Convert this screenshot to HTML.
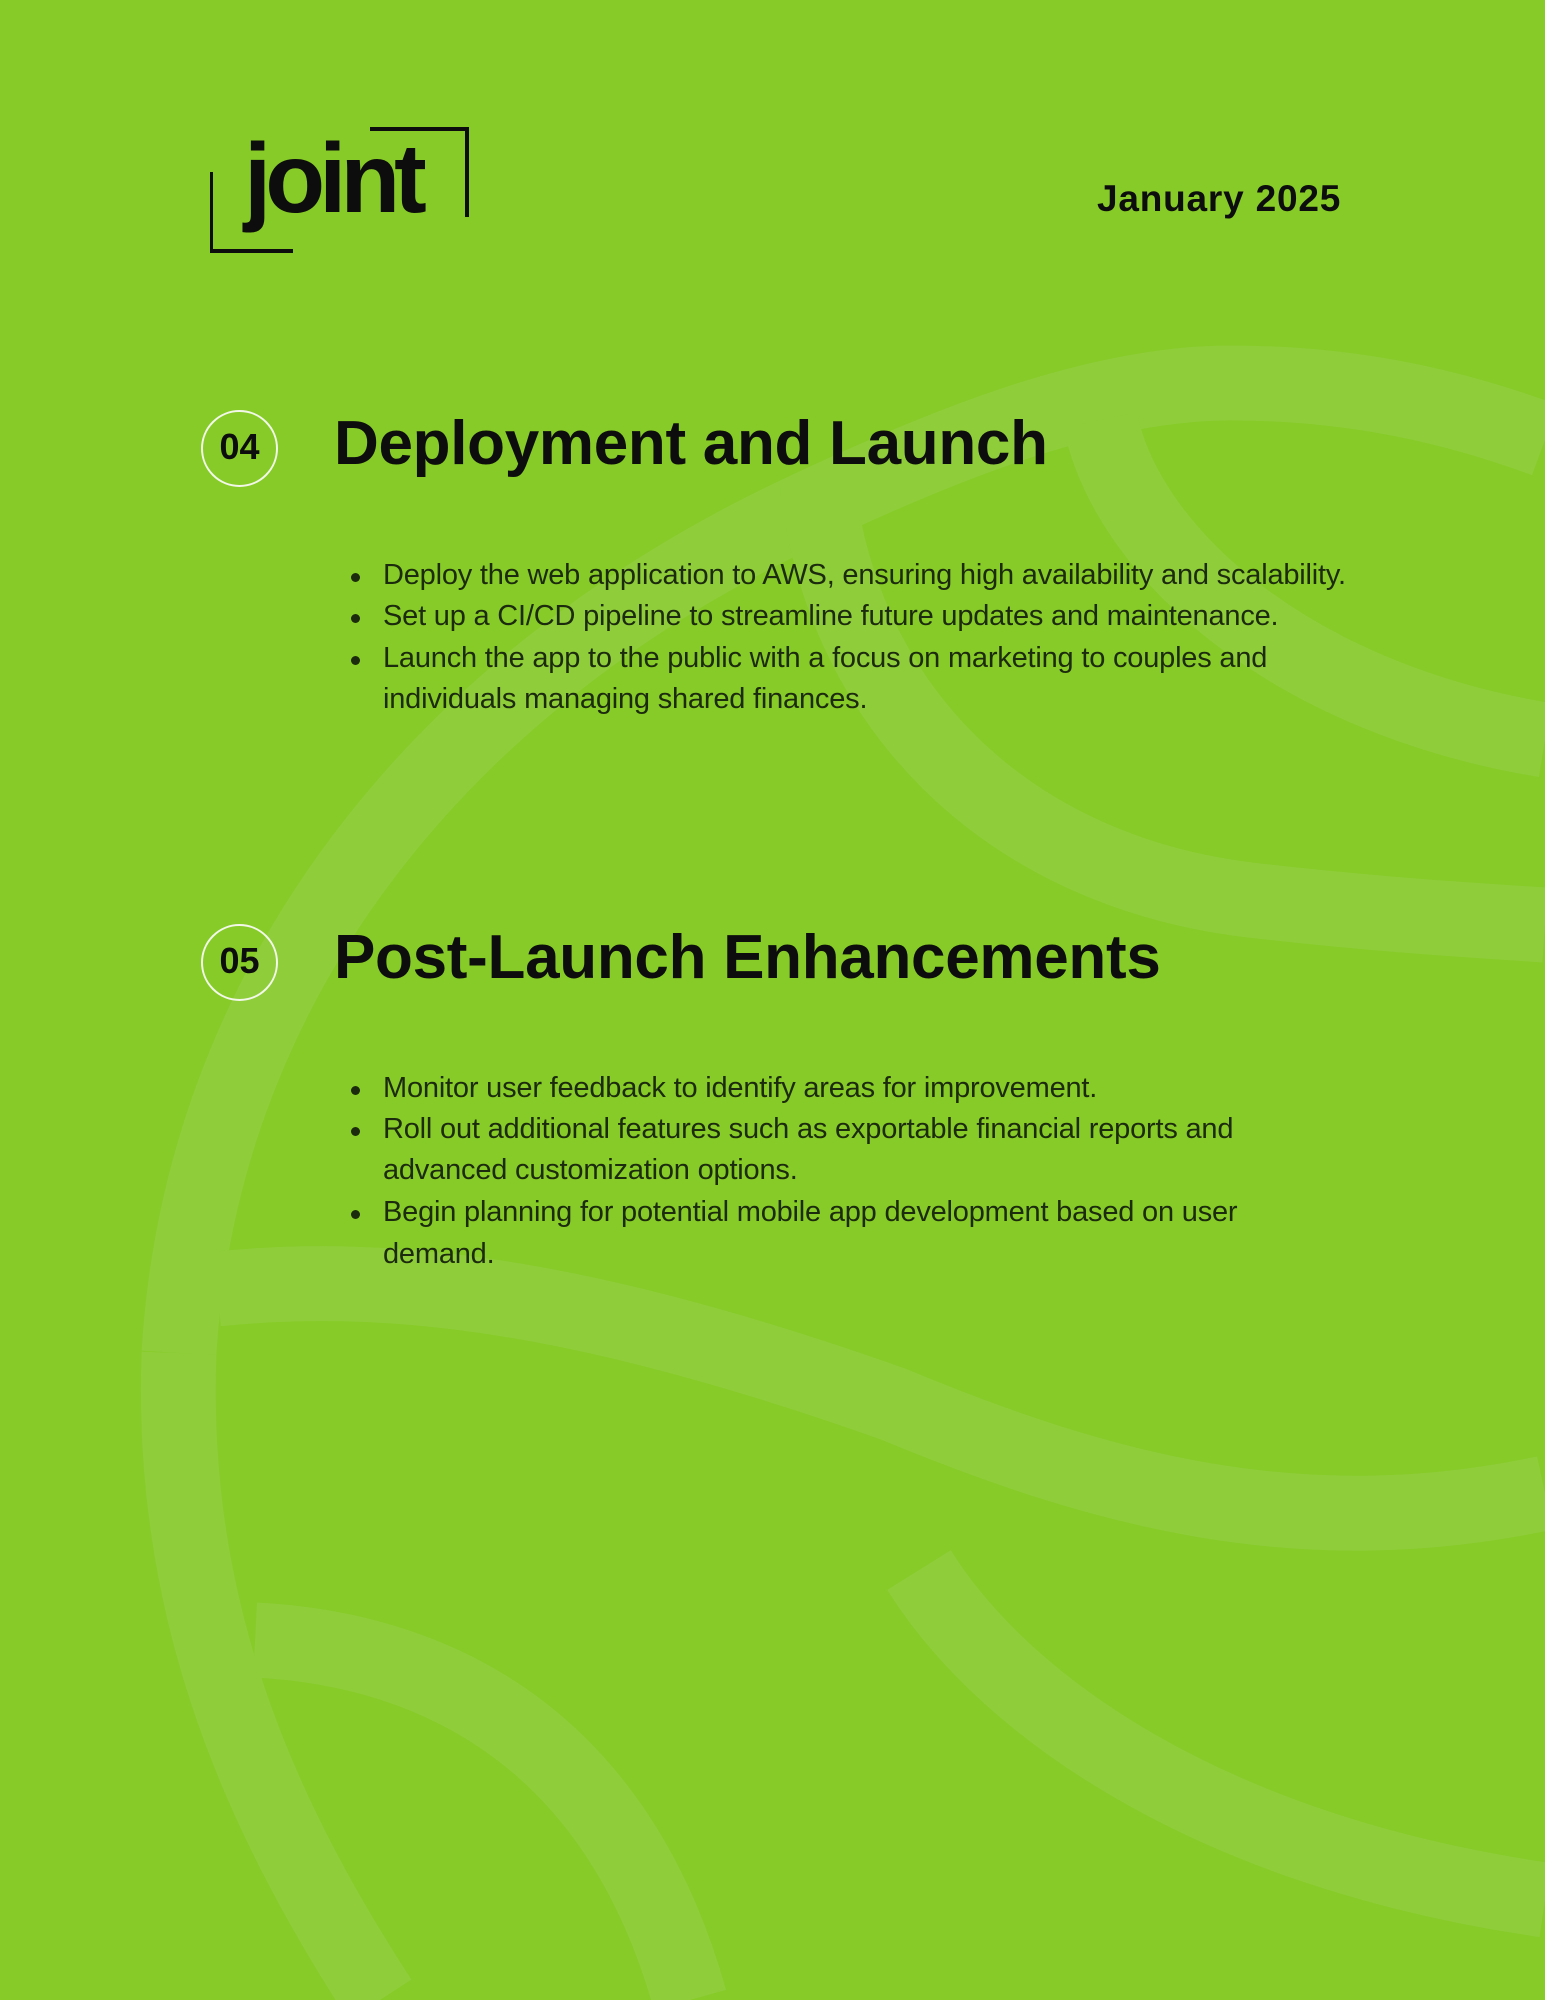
<!DOCTYPE html>
<html><head><meta charset="utf-8"><style>
html,body{margin:0;padding:0}
body{width:1545px;height:2000px;background:#86cb27;position:relative;overflow:hidden;font-family:"Liberation Sans",sans-serif}
.bg{position:absolute;left:0;top:0}
.a{position:absolute;white-space:nowrap}
.h{font-weight:bold;font-size:62px;color:#0d0d0d;letter-spacing:-0.3px}
.c{position:absolute;width:77px;height:77px;border:2px solid #f2f7e8;border-radius:50%;box-sizing:border-box;text-align:center;line-height:70px;font-weight:bold;font-size:36px;color:#0d0d0d}
.l{position:absolute;left:383px;font-size:29px;color:#1c2a0e;white-space:nowrap;letter-spacing:-0.2px}
.d{position:absolute;left:351px;width:9px;height:9px;border-radius:50%;background:#1c2a0e}
</style></head><body>
<svg class="bg" width="1545" height="2000" viewBox="0 0 1545 2000">
<g fill="none" stroke="#8fcd3a" stroke-width="75">
<path d="M179 1353 C200 1000 420 700 778 523 C950 440 1100 383 1230 383 C1350 383 1450 405 1545 440"/>
<path d="M179 1353 C170 1600 250 1800 380 2000"/>
<path d="M817 480 C840 700 1000 870 1250 900 C1380 915 1470 920 1545 925"/>
<path d="M1100 420 C1130 560 1300 700 1545 740"/>
<path d="M217 1289 C400 1270 600 1300 893 1404 C1100 1490 1300 1545 1545 1493"/>
<path d="M919 1570 C1000 1700 1200 1850 1545 1900"/>
<path d="M255 1640 C450 1650 620 1750 690 2000"/>
</g>
</svg>
<div style="position:absolute;left:210px;top:172px;width:3px;height:80px;background:#0d0d0d"></div>
<div style="position:absolute;left:210px;top:249px;width:83px;height:4px;background:#0d0d0d"></div>
<div style="position:absolute;left:370px;top:127px;width:99px;height:4px;background:#0d0d0d"></div>
<div style="position:absolute;left:465px;top:127px;width:4px;height:90px;background:#0d0d0d"></div>
<div class="a" style="left:244px;top:122px;font-size:98px;font-weight:bold;color:#0d0d0d;letter-spacing:-6px">joint</div>
<div class="a" style="left:1097px;top:178px;font-size:37px;font-weight:bold;color:#0d0d0d;letter-spacing:0.8px">January 2025</div>

<div class="c" style="left:201px;top:410px">04</div>
<div class="a h" style="left:334px;top:408px">Deployment and Launch</div>
<div class="d" style="top:573px"></div><div class="l" style="top:559px">Deploy the web application to AWS, ensuring high availability and scalability.</div>
<div class="d" style="top:614px"></div><div class="l" style="top:600px">Set up a CI/CD pipeline to streamline future updates and maintenance.</div>
<div class="d" style="top:656px"></div><div class="l" style="top:642px">Launch the app to the public with a focus on marketing to couples and</div>
<div class="l" style="top:683px">individuals managing shared finances.</div>

<div class="c" style="left:201px;top:924px">05</div>
<div class="a h" style="left:334px;top:922px">Post-Launch Enhancements</div>
<div class="d" style="top:1086px"></div><div class="l" style="top:1072px">Monitor user feedback to identify areas for improvement.</div>
<div class="d" style="top:1127px"></div><div class="l" style="top:1113px">Roll out additional features such as exportable financial reports and</div>
<div class="l" style="top:1154px">advanced customization options.</div>
<div class="d" style="top:1210px"></div><div class="l" style="top:1196px">Begin planning for potential mobile app development based on user</div>
<div class="l" style="top:1238px">demand.</div>
</body></html>
